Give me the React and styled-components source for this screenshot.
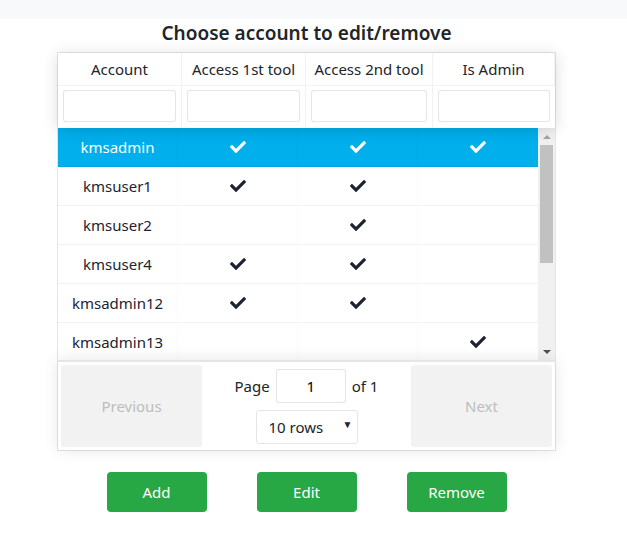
import React from 'react';
import styled, { createGlobalStyle } from 'styled-components';
import { FaCheck } from 'react-icons/fa';

const GlobalStyle = createGlobalStyle`
  body {
    margin: 0;
    background: #fff;
    font-family: "Noto Sans", "Open Sans", sans-serif;
    color: #212529;
  }
`;

const TopBar = styled.div`
  height: 19px;
  background: #f8f9fa;
`;

const Content = styled.div`
  width: 499px;
  margin-left: 57px;
  display: flex;
  flex-direction: column;
`;

const Title = styled.h2`
  margin: 0;
  height: 33px;
  line-height: 28px;
  text-align: center;
  font-size: 19px;
  font-weight: 600;
  color: #212529;
`;

const Table = styled.div`
  border: 1px solid rgba(0, 0, 0, 0.1);
  display: flex;
  flex-direction: column;
`;

const HeadRow = styled.div`
  display: grid;
  grid-template-columns: 124px 124px 127px 1fr;
  box-shadow: 0 2px 15px 0 rgba(0, 0, 0, 0.15);
  position: relative;
  z-index: 1;
  background: #fff;
`;

const HeadCell = styled.div`
  height: 32px;
  line-height: 32px;
  text-align: center;
  font-size: 15px;
  border-right: 1px solid rgba(0, 0, 0, 0.05);
  border-bottom: 1px solid rgba(0, 0, 0, 0.05);
  &:last-child { border-right: none; }
`;

const FilterCell = styled.div`
  padding: 4px 5px 6px;
  border-right: 1px solid rgba(0, 0, 0, 0.05);
  &:last-child { border-right: none; }
`;

const FilterInput = styled.input`
  box-sizing: border-box;
  width: 100%;
  height: 32px;
  border: 1px solid rgba(0, 0, 0, 0.1);
  border-radius: 3px;
  outline: none;
  font: inherit;
`;

const Body = styled.div`
  display: flex;
  height: 232px;
  overflow: hidden;
`;

const Rows = styled.div`
  flex: 1;
  display: flex;
  flex-direction: column;
`;

const Row = styled.div`
  display: grid;
  grid-template-columns: repeat(4, 1fr);
  height: 38px;
  flex-shrink: 0;
  border-bottom: 1px solid rgba(0, 0, 0, 0.05);
  background: ${(p) => (p.selected ? '#00afec' : '#fff')};
  color: ${(p) => (p.selected ? '#fff' : '#1d2330')};
`;

const Cell = styled.div`
  display: flex;
  align-items: center;
  justify-content: center;
  font-size: 15px;
  border-right: 1px solid rgba(0, 0, 0, 0.02);
  &:last-child { border-right: none; }
`;

const Scrollbar = styled.div`
  width: 17px;
  background: #f1f1f1;
  display: flex;
  flex-direction: column;
  align-items: center;
`;

const Arrow = styled.div`
  height: 17px;
  width: 17px;
  display: flex;
  align-items: center;
  justify-content: center;
  &::before {
    content: '';
    border-left: 4px solid transparent;
    border-right: 4px solid transparent;
    ${(p) => (p.up
      ? 'border-bottom: 4px solid #a3a3a3;'
      : 'border-top: 4px solid #505050;')}
  }
`;

const Track = styled.div`
  flex: 1;
  width: 13px;
`;

const Thumb = styled.div`
  height: 118px;
  background: #c1c1c1;
`;

const Pagination = styled.div`
  display: flex;
  justify-content: space-between;
  align-items: stretch;
  padding: 3px;
  border-top: 2px solid rgba(0, 0, 0, 0.1);
  box-shadow: 0 0 15px 0 rgba(0, 0, 0, 0.1);
  position: relative;
  z-index: 1;
  background: #fff;
`;

const PageButton = styled.button`
  width: 141px;
  height: 82px;
  border: none;
  border-radius: 3px;
  background: #f2f2f2;
  color: #bdbdbd;
  font: inherit;
  font-size: 15px;
`;

const Center = styled.div`
  display: flex;
  flex-direction: column;
  align-items: center;
  justify-content: center;
  gap: 7px;
`;

const PageInfo = styled.div`
  display: flex;
  align-items: center;
  gap: 6px;
  font-size: 15px;
`;

const PageInput = styled.input`
  box-sizing: border-box;
  width: 70px;
  height: 34px;
  border: 1px solid rgba(0, 0, 0, 0.1);
  border-radius: 3px;
  text-align: center;
  font: inherit;
  font-size: 15px;
  outline: none;
`;

const RowsSelect = styled.div`
  box-sizing: border-box;
  width: 102px;
  height: 34px;
  border: 1px solid rgba(0, 0, 0, 0.1);
  border-radius: 3px;
  display: flex;
  align-items: center;
  justify-content: space-between;
  padding: 0 4px 0 12px;
  font-size: 15px;
`;

const Caret = styled.span`
  font-size: 10px;
  margin-top: -6px;
`;

const Actions = styled.div`
  display: flex;
  justify-content: center;
  gap: 50px;
  margin-top: 21px;
`;

const ActionButton = styled.button`
  width: 100px;
  height: 40px;
  border: none;
  border-radius: 4px;
  background: #28a745;
  color: #fff;
  font: inherit;
  font-size: 15px;
`;

const accounts = [
  { name: 'kmsadmin', t1: true, t2: true, admin: true },
  { name: 'kmsuser1', t1: true, t2: true, admin: false },
  { name: 'kmsuser2', t1: false, t2: true, admin: false },
  { name: 'kmsuser4', t1: true, t2: true, admin: false },
  { name: 'kmsadmin12', t1: true, t2: true, admin: false },
  { name: 'kmsadmin13', t1: false, t2: false, admin: true },
];

const Check = ({ on }) => (on ? <FaCheck size={16} /> : null);

export default function App() {
  return (
    <>
      <GlobalStyle />
      <TopBar />
      <Content>
        <Title>Choose account to edit/remove</Title>
        <Table>
          <HeadRow>
            <HeadCell>Account</HeadCell>
            <HeadCell>Access 1st tool</HeadCell>
            <HeadCell>Access 2nd tool</HeadCell>
            <HeadCell>Is Admin</HeadCell>
            <FilterCell><FilterInput /></FilterCell>
            <FilterCell><FilterInput /></FilterCell>
            <FilterCell><FilterInput /></FilterCell>
            <FilterCell><FilterInput /></FilterCell>
          </HeadRow>
          <Body>
            <Rows>
              {accounts.map((a, i) => (
                <Row key={a.name} selected={i === 0}>
                  <Cell>{a.name}</Cell>
                  <Cell><Check on={a.t1} /></Cell>
                  <Cell><Check on={a.t2} /></Cell>
                  <Cell><Check on={a.admin} /></Cell>
                </Row>
              ))}
            </Rows>
            <Scrollbar>
              <Arrow up />
              <Track><Thumb /></Track>
              <Arrow />
            </Scrollbar>
          </Body>
          <Pagination>
            <PageButton disabled>Previous</PageButton>
            <Center>
              <PageInfo>
                Page <PageInput defaultValue="1" /> of 1
              </PageInfo>
              <RowsSelect>
                10 rows <Caret>▼</Caret>
              </RowsSelect>
            </Center>
            <PageButton disabled>Next</PageButton>
          </Pagination>
        </Table>
        <Actions>
          <ActionButton>Add</ActionButton>
          <ActionButton>Edit</ActionButton>
          <ActionButton>Remove</ActionButton>
        </Actions>
      </Content>
    </>
  );
}
